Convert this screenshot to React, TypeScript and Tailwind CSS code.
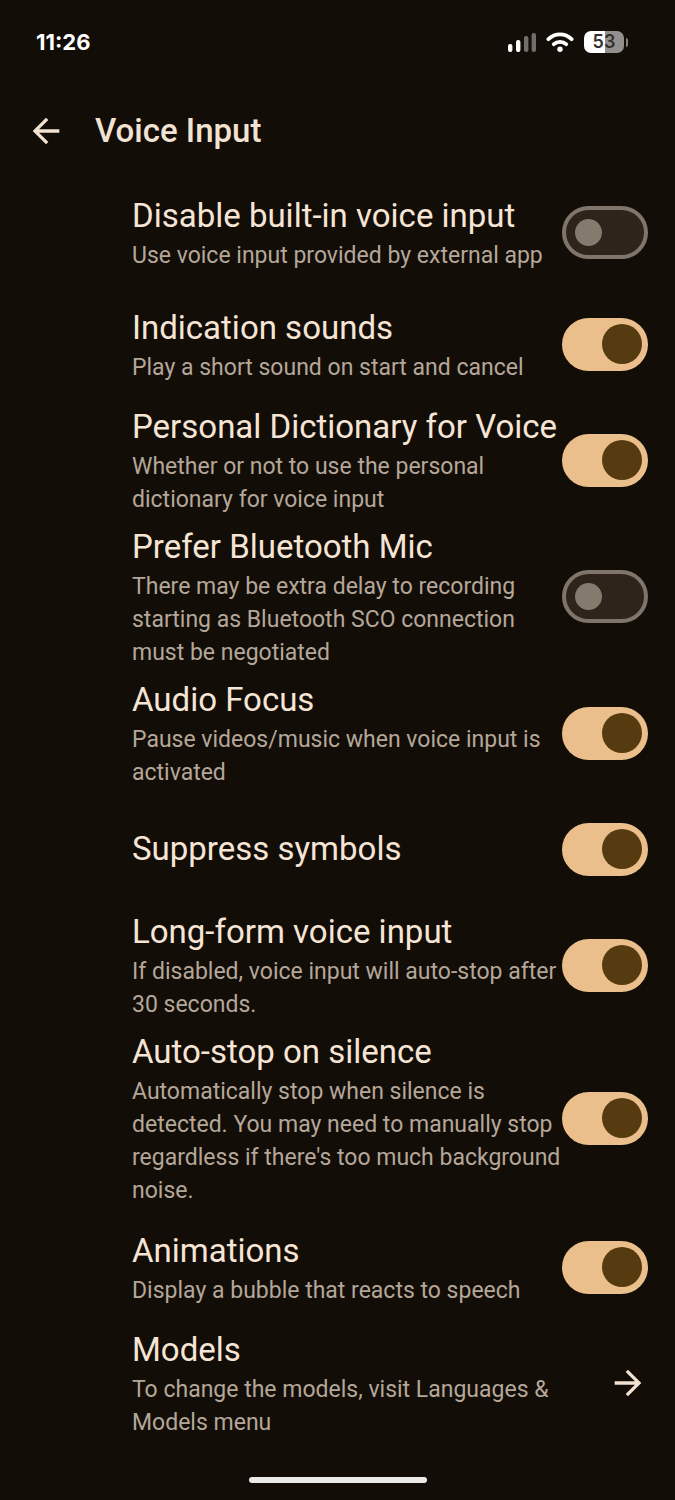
import { useState } from "react";
import clsx from "clsx";

type Setting = {
    id: string
    title: string
    description?: string
    enabled: boolean
}

const settings: Setting[] = [
    { id: "disable-builtin", title: "Disable built-in voice input", description: "Use voice input provided by external app", enabled: false },
    { id: "sounds", title: "Indication sounds", description: "Play a short sound on start and cancel", enabled: true },
    { id: "dictionary", title: "Personal Dictionary for Voice", description: "Whether or not to use the personal dictionary for voice input", enabled: true },
    { id: "bluetooth", title: "Prefer Bluetooth Mic", description: "There may be extra delay to recording starting as Bluetooth SCO connection must be negotiated", enabled: false },
    { id: "audio-focus", title: "Audio Focus", description: "Pause videos/music when voice input is activated", enabled: true },
    { id: "symbols", title: "Suppress symbols", enabled: true },
    { id: "long-form", title: "Long-form voice input", description: "If disabled, voice input will auto-stop after 30 seconds.", enabled: true },
    { id: "auto-stop", title: "Auto-stop on silence", description: "Automatically stop when silence is detected. You may need to manually stop regardless if there's too much background noise.", enabled: true },
    { id: "animations", title: "Animations", description: "Display a bubble that reacts to speech", enabled: true },
]

const rowClass = "flex min-h-[112px] items-center py-1 pl-[132px] pr-[27px]"

function StatusBar() {
    return (
        <div className="flex h-[86px] items-center justify-between pb-[2px] pl-9 pr-[47px] text-white">
            <span className="font-['Inter',sans-serif] text-[22px] font-bold leading-8">11:26</span>
            <div className="flex items-center gap-[10px]">
                <svg className="h-5 w-7" viewBox="0 0 28 20" fill="currentColor" aria-hidden="true">
                    <rect x="0" y="12" width="4.4" height="8" rx="2" />
                    <rect x="8" y="8" width="4.4" height="12" rx="2" />
                    <rect x="16" y="4" width="4.4" height="16" rx="2" opacity="0.4" />
                    <rect x="23.6" y="1" width="4.4" height="19" rx="2" opacity="0.4" />
                </svg>
                <svg className="h-5 w-7" viewBox="0 0 28 20" fill="none" stroke="currentColor" strokeWidth="3.8" strokeLinecap="round" aria-hidden="true">
                    <path d="M2.4 7.2C9 .7 19 .7 25.6 7.2" />
                    <path d="M7.8 12.2C11.3 9 16.7 9 20.2 12.2" />
                    <circle cx="14" cy="17.2" r="2.7" fill="currentColor" stroke="none" />
                </svg>
                <div className="flex items-center gap-[2px]">
                    <div className="flex h-[22px] w-10 items-center justify-center rounded-[7px] bg-linear-to-r from-white from-53% to-[#92908e] to-53% font-['Inter',sans-serif] text-[18px] font-semibold leading-5 text-[#33302c]">
                        53
                    </div>
                    <div className="h-[9px] w-[2px] rounded-r-full bg-[#85827f]" />
                </div>
            </div>
        </div>
    )
}

function Header() {
    return (
        <header className="flex h-[90px] items-center gap-[29px] pl-[26px] text-[#f2e2d2]">
            <button type="button" aria-label="Back">
                <svg className="h-10 w-10" viewBox="0 0 24 24" fill="currentColor">
                    <path d="M20 11H7.83l5.59-5.59L12 4l-8 8 8 8 1.41-1.41L7.83 13H20z" />
                </svg>
            </button>
            <h1 className="text-[33px] font-medium leading-[46px]">Voice Input</h1>
        </header>
    )
}

function SettingRow({ id, title, description, enabled }: Setting) {
    const [checked, setChecked] = useState(enabled)

    return (
        <li className={rowClass}>
            <label htmlFor={id} className="min-w-0 flex-1">
                <span className="block text-[33px] leading-[46px] text-[#f6e5d5]">{title}</span>
                {description && <span className="block text-[23px] leading-[33px] text-[#b4a799]">{description}</span>}
            </label>
            <input
                id={id}
                type="checkbox"
                role="switch"
                checked={checked}
                onChange={(event) => setChecked(event.target.checked)}
                className={clsx(
                    "flex h-[53px] w-[86px] shrink-0 appearance-none items-center rounded-full before:block before:rounded-full",
                    checked
                        ? "justify-end bg-[#ebbf8b] pr-[6px] before:h-10 before:w-10 before:bg-[#573b10]"
                        : "border-4 border-[#80756a] bg-[#2e241b] pl-[9px] before:h-[27px] before:w-[27px] before:bg-[#857a6e]"
                )}
            />
        </li>
    )
}

export default function App() {
    return (
        <div className="min-h-screen bg-[#130d07] font-['Roboto',sans-serif]">
            <StatusBar />
            <Header />
            <main>
                <ul>
                    {settings.map(setting => (
                        <SettingRow key={setting.id} {...setting} />
                    ))}
                    <li>
                        <a href="#models" className={rowClass}>
                            <span className="min-w-0 flex-1">
                                <span className="block text-[33px] leading-[46px] text-[#f6e5d5]">Models</span>
                                <span className="block text-[23px] leading-[33px] text-[#b4a799]">To change the models, visit Languages & Models menu</span>
                            </span>
                            <svg className="h-10 w-10 shrink-0 text-[#f2e2d2]" viewBox="0 0 24 24" fill="currentColor" aria-hidden="true">
                                <path d="M12 4l-1.41 1.41L16.17 11H4v2h12.17l-5.58 5.59L12 20l8-8z" />
                            </svg>
                        </a>
                    </li>
                </ul>
            </main>
            <div className="mx-auto mt-[34px] h-[6px] w-[178px] rounded-full bg-[#ecebe7]" />
        </div>
    )
}
